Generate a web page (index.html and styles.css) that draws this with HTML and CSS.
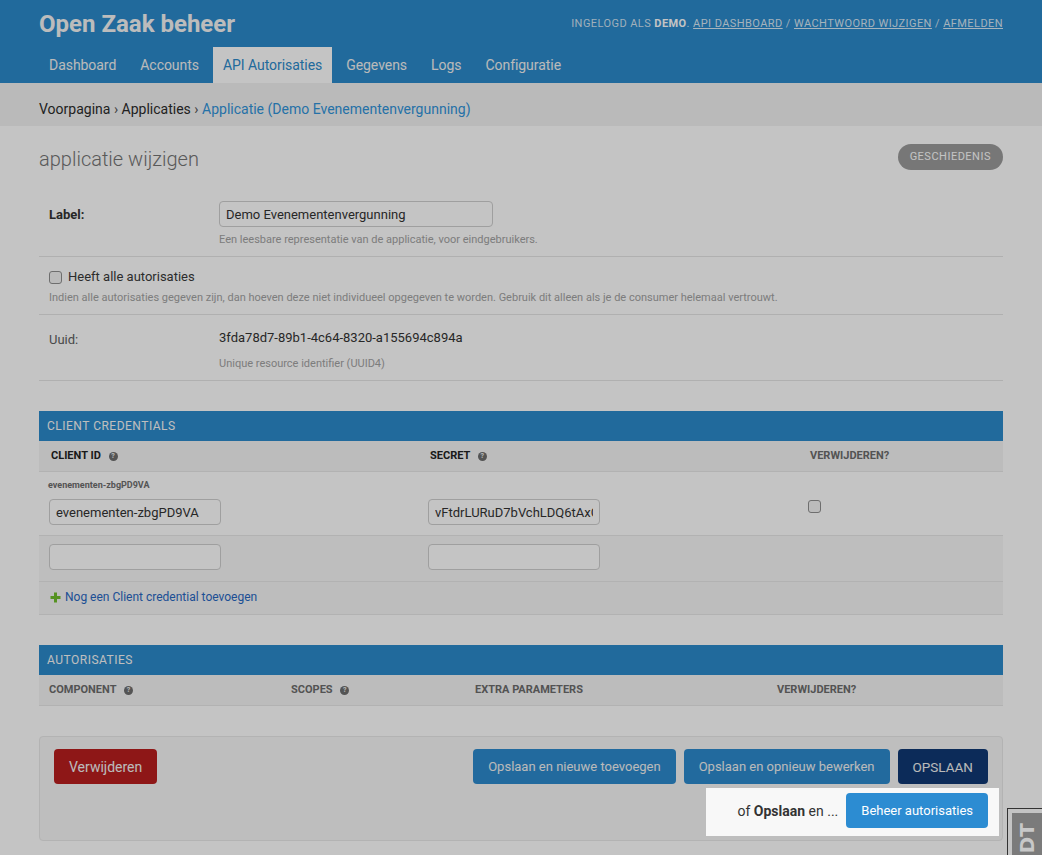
FILE: index.html
```html
<!DOCTYPE html>
<html lang="nl">
<head>
<meta charset="utf-8">
<title>Applicatie wijzigen | Open Zaak beheer</title>
<link rel="stylesheet" href="styles.css">
</head>
<body>
<header class="header">
  <div class="branding">
    <h1 class="site-name">Open Zaak beheer</h1>
    <div class="user-tools">Ingelogd als <strong>demo</strong>. <a href="#">API dashboard</a> / <a href="#">Wachtwoord wijzigen</a> / <a href="#">Afmelden</a></div>
  </div>
  <nav class="nav">
    <a href="#">Dashboard</a>
    <a href="#">Accounts</a>
    <a href="#" class="active">API Autorisaties</a>
    <a href="#">Gegevens</a>
    <a href="#">Logs</a>
    <a href="#">Configuratie</a>
  </nav>
</header>

<div class="breadcrumbs">
  <a href="#">Voorpagina</a> <span class="sep">›</span> <a href="#">Applicaties</a> <span class="sep">›</span> <span class="current">Applicatie (Demo Evenementenvergunning)</span>
</div>

<main class="content">
  <div class="title-row">
    <h1 class="page-title">applicatie wijzigen</h1>
    <a href="#" class="history">Geschiedenis</a>
  </div>

  <fieldset class="form-fields">
    <div class="form-row">
      <label class="field-label required">Label:</label>
      <div class="field-box">
        <input class="text-input wide" type="text" value="Demo Evenementenvergunning">
        <div class="help">Een leesbare representatie van de applicatie, voor eindgebruikers.</div>
      </div>
    </div>
    <div class="form-row stacked">
      <label class="check-label"><input type="checkbox" class="check"> Heeft alle autorisaties</label>
      <div class="help tight">Indien alle autorisaties gegeven zijn, dan hoeven deze niet individueel opgegeven te worden. Gebruik dit alleen als je de consumer helemaal vertrouwt.</div>
    </div>
    <div class="form-row">
      <label class="field-label plain">Uuid:</label>
      <div class="field-box">
        <div class="readonly">3fda78d7-89b1-4c64-8320-a155694c894a</div>
        <div class="help">Unique resource identifier (UUID4)</div>
      </div>
    </div>
  </fieldset>

  <section class="inline-group">
    <h2 class="caption">Client credentials</h2>
    <table class="tabular creds">
      <colgroup><col class="c1"><col class="c2"><col></colgroup>
      <thead>
        <tr>
          <th class="required">Client ID <span class="help-icon">?</span></th>
          <th class="required">Secret <span class="help-icon">?</span></th>
          <th>Verwijderen?</th>
        </tr>
      </thead>
      <tbody>
        <tr class="has-original">
          <td><div class="original">evenementen-zbgPD9VA</div><input class="text-input small" type="text" value="evenementen-zbgPD9VA"></td>
          <td><input class="text-input small" type="text" value="vFtdrLURuD7bVchLDQ6tAxGq4HkR2pW9"></td>
          <td><input type="checkbox" class="check delete-check"></td>
        </tr>
        <tr class="row2">
          <td><input class="text-input small" type="text" value=""></td>
          <td><input class="text-input small" type="text" value=""></td>
          <td></td>
        </tr>
        <tr class="add-row">
          <td colspan="3"><a href="#" class="add-link"><svg class="plus" width="11" height="11" viewBox="0 0 11 11"><rect x="4" y="0.5" width="3" height="10" fill="#70bf2b"/><rect x="0.5" y="4" width="10" height="3" fill="#70bf2b"/></svg>Nog een Client credential toevoegen</a></td>
        </tr>
      </tbody>
    </table>
  </section>

  <section class="inline-group">
    <h2 class="caption">Autorisaties</h2>
    <table class="tabular auths">
      <colgroup><col class="a1"><col class="a2"><col class="a3"><col></colgroup>
      <thead>
        <tr>
          <th>Component <span class="help-icon">?</span></th>
          <th>Scopes <span class="help-icon">?</span></th>
          <th>Extra parameters</th>
          <th>Verwijderen?</th>
        </tr>
      </thead>
    </table>
  </section>

  <div class="submit-row">
    <div class="submit-main">
      <a href="#" class="btn delete">Verwijderen</a>
      <div class="submit-buttons">
        <button class="btn primary">Opslaan en nieuwe toevoegen</button>
        <button class="btn primary">Opslaan en opnieuw bewerken</button>
        <button class="btn default">OPSLAAN</button>
      </div>
    </div>
    <div class="submit-extra">
      <div class="tour-highlight">
        <span class="or-text">of <strong>Opslaan</strong> en ...</span>
        <button class="btn accent">Beheer autorisaties</button>
      </div>
    </div>
  </div>
</main>

<div class="djdt-handle"><span class="djdt-text">DT</span></div>
</body>
</html>
```

FILE: styles.css
```css
:root {
  --blue: #2c8acb;
  --btn-blue: #2d8ace;
}

* { box-sizing: border-box; }

body {
  margin: 0;
  background: #fff;
  color: #333;
  font-family: Roboto, "Liberation Sans", Arial, sans-serif;
  font-size: 14px;
}

a { text-decoration: none; }

/* Header */
.header {
  background: var(--blue);
  padding: 0 39px;
}
.branding {
  display: flex;
  justify-content: space-between;
  align-items: center;
  height: 47px;
}
.site-name {
  margin: 0;
  font-size: 24px;
  font-weight: 700;
  line-height: 24px;
  color: #f5f5f5;
}
.user-tools {
  font-size: 11px;
  letter-spacing: 0.43px;
  text-transform: uppercase;
  color: rgba(255, 255, 255, 0.78);
}
.user-tools strong { color: #fff; font-weight: 700; }
.user-tools a { color: rgba(255, 255, 255, 0.82); text-decoration: underline; }

.nav {
  display: flex;
  gap: 4px;
  height: 36px;
}
.nav a {
  padding: 0 10px;
  line-height: 36px;
  color: #f2f2f2;
  font-size: 14px;
  letter-spacing: -0.05px;
}
.nav a.active {
  background: #fff;
  color: var(--blue);
}

/* Breadcrumbs */
.breadcrumbs {
  background: #f3f3f3;
  padding: 18px 39px 8px;
  line-height: 17px;
  font-size: 14px;
  color: #333;
}
.breadcrumbs a { color: #2c2c2c; }
.breadcrumbs .sep { color: #555; }
.breadcrumbs .current { color: #3193da; }

/* Content */
.content { padding: 0 39px 60px; }

.title-row {
  display: flex;
  justify-content: space-between;
  align-items: flex-start;
  margin-top: 18px;
  height: 26px;
}
.page-title {
  margin: 0;
  padding-top: 2px;
  font-size: 20px;
  font-weight: 300;
  line-height: 26px;
  color: #747474;
}
.history {
  display: block;
  height: 26px;
  line-height: 26px;
  padding: 0 12px;
  border-radius: 13px;
  background: #9b9b9b;
  color: #fff;
  font-size: 11px;
  letter-spacing: 0.5px;
  text-transform: uppercase;
}

.form-fields {
  margin: 21px 0 0;
  padding: 0;
  border: 0;
}
.form-row {
  display: flex;
  padding: 10px;
  border-bottom: 1px solid #e5e5e5;
  font-size: 13px;
}
.form-row.stacked { flex-direction: column; }
.field-label {
  flex: 0 0 170px;
  line-height: 26px;
  padding-top: 1px;
  color: #333;
}
.field-label.required { font-weight: 700; }
.field-label.plain { color: #606060; padding-top: 2px; }
.field-box { display: flex; flex-direction: column; }
.readonly { line-height: 26px; color: #333; }
.help {
  margin-top: 6px;
  font-size: 11px;
  line-height: 13px;
  color: #a3a3a3;
}
.help.tight { margin-top: 4px; }
.check-label {
  display: flex;
  align-items: center;
  gap: 6px;
  line-height: 20px;
  color: #3a3a3a;
}
.check {
  appearance: none;
  -webkit-appearance: none;
  display: block;
  width: 13px;
  height: 13px;
  margin: 0;
  border: 1px solid #8f8f8f;
  border-radius: 3px;
  background: #f4f4f4;
}
.delete-check { margin-top: 1px; }

.text-input {
  height: 26px;
  padding: 0 6px;
  border: 1px solid #cfcfcf;
  border-radius: 4px;
  background: #fff;
  font-family: Roboto, "Liberation Sans", Arial, sans-serif;
  font-size: 13px;
  color: #333;
}
.text-input.wide { width: 274px; }
.text-input.small { width: 172px; display: block; }

/* Inline groups */
.inline-group { margin-top: 30px; }
.caption {
  margin: 0;
  height: 30px;
  line-height: 30px;
  padding: 0 8px;
  background: var(--blue);
  color: #f8f8f8;
  font-size: 12px;
  font-weight: 400;
  letter-spacing: 0.5px;
  text-transform: uppercase;
}
.tabular {
  width: 100%;
  border-collapse: collapse;
  table-layout: fixed;
}
.creds col.c1 { width: 379px; }
.creds col.c2 { width: 380px; }
.auths col.a1 { width: 242px; }
.auths col.a2 { width: 184px; }
.auths col.a3 { width: 302px; }

.tabular th {
  background: #f5f5f5;
  border-bottom: 1px solid #e8e8e8;
  padding: 8px 12px;
  line-height: 14px;
  font-size: 11px;
  font-weight: 700;
  text-transform: uppercase;
  text-align: left;
  color: #6c6c6c;
}
.tabular th.required { color: #232323; }
.auths th { padding-left: 10px; }

.help-icon {
  display: inline-block;
  width: 9px;
  height: 9px;
  margin-left: 5px;
  border-radius: 50%;
  background: #6e6e6e;
  color: #f2f2f2;
  font-size: 7px;
  font-weight: 700;
  line-height: 9px;
  text-align: center;
  vertical-align: 1px;
}

.tabular td {
  padding: 8px 10px 10px;
  vertical-align: top;
  border-bottom: 1px solid #e8e8e8;
}
.has-original td { padding-top: 27px; }
.has-original td:first-child { padding-top: 8px; }
.original {
  height: 19px;
  margin-left: -1px;
  font-size: 9px;
  font-weight: 700;
  line-height: 11px;
  color: #6e6e6e;
}
.row2 td { background: #f8f8f8; padding-bottom: 11px; }
.add-row td {
  background: #f6f6f6;
  padding: 8px 11px;
  line-height: 15px;
}
.add-link {
  display: inline-flex;
  align-items: center;
  gap: 4px;
  font-size: 12px;
  color: #2867c2;
}
.plus { display: block; }

/* Submit row */
.submit-row {
  margin-top: 30px;
  padding: 12px 14px;
  border: 1px solid #e9e9e9;
  border-radius: 4px;
  background: #f8f8f8;
}
.submit-main {
  display: flex;
  justify-content: space-between;
}
.submit-buttons { display: flex; gap: 8px; }
.btn {
  display: inline-flex;
  align-items: center;
  height: 35px;
  padding: 0 15px;
  border: 0;
  border-radius: 4px;
  font-family: Roboto, "Liberation Sans", Arial, sans-serif;
  font-size: 13px;
  color: #fff;
}
.btn.delete { background: #b91f1f; color: #f4f4f4; font-size: 14px; }
.btn.primary { background: var(--btn-blue); color: #f2f2f2; }
.btn.default { background: #103974; color: #f2f2f2; font-size: 13.5px; }
.btn.accent { background: #2c8cd2; color: #fff; }

.submit-extra {
  display: flex;
  justify-content: flex-end;
  margin-top: 9px;
}
.tour-highlight {
  position: relative;
  z-index: 10;
  display: flex;
  align-items: center;
  gap: 8px;
  padding: 5px 11px 8px 32px;
  margin: -5px -11px -8px -32px;
  background: #f8f8f8;
  box-shadow: 0 0 0 3000px rgba(0, 0, 0, 0.23);
}
.or-text { font-size: 14px; color: #333; }
.or-text strong { font-weight: 700; }

/* Debug toolbar handle */
.djdt-handle {
  position: fixed;
  left: 1008px;
  top: 809px;
  z-index: 20;
  width: 50px;
  height: 70px;
  border: 4px solid #c4c4c4;
  outline: 1px solid #333;
  background: #7b7b7b;
  padding: 10px 0 0 3px;
}
.djdt-text {
  display: block;
  writing-mode: vertical-rl;
  transform: rotate(180deg);
  font-family: "DejaVu Sans", sans-serif;
  font-size: 20px;
  font-weight: 700;
  line-height: 24px;
  color: #c8c8c8;
}
```
